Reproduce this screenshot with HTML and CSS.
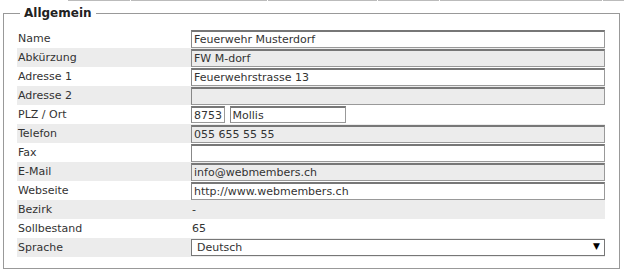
FILE: index.html
```
<!DOCTYPE html>
<html lang="de">
<head>
    <meta charset="UTF-8">
    <title>Allgemein</title>
    <link rel="stylesheet" href="styles.css">
</head>
<body>
    <div class="top-line">
        <span class="seg s1"></span>
        <span class="seg s2"></span>
        <span class="seg s3"></span>
        <span class="seg s4"></span>
        <span class="seg s5"></span>
        <span class="seg s6"></span>
    </div>
    <fieldset class="box">
        <legend>Allgemein</legend>
        <table class="form-table">
            <tr><td class="lbl">Name</td><td><input class="txt" type="text" value="Feuerwehr Musterdorf"></td></tr>
            <tr class="alt"><td class="lbl">Abkürzung</td><td><input class="txt" type="text" value="FW M-dorf"></td></tr>
            <tr><td class="lbl">Adresse 1</td><td><input class="txt" type="text" value="Feuerwehrstrasse 13"></td></tr>
            <tr class="alt"><td class="lbl">Adresse 2</td><td><input class="txt" type="text" value=""></td></tr>
            <tr><td class="lbl">PLZ / Ort</td><td><input class="txt plz" type="text" value="8753"> <input class="txt ort" type="text" value="Mollis"></td></tr>
            <tr class="alt"><td class="lbl">Telefon</td><td><input class="txt" type="text" value="055 655 55 55"></td></tr>
            <tr><td class="lbl">Fax</td><td><input class="txt" type="text" value=""></td></tr>
            <tr class="alt"><td class="lbl">E-Mail</td><td><input class="txt" type="text" value="info@webmembers.ch"></td></tr>
            <tr><td class="lbl">Webseite</td><td><input class="txt" type="text" value="http://www.webmembers.ch"></td></tr>
            <tr class="alt"><td class="lbl">Bezirk</td><td class="val">-</td></tr>
            <tr><td class="lbl">Sollbestand</td><td class="val">65</td></tr>
            <tr class="alt"><td class="lbl">Sprache</td><td>
                <span class="sel-wrap">
                    <select class="sel">
                        <option>Deutsch</option>
                        <option>Français</option>
                        <option>Italiano</option>
                    </select>
                </span>
            </td></tr>
        </table>
    </fieldset>
</body>
</html>
```

FILE: styles.css
```
* {
    margin: 0;
    padding: 0;
}
body {
    font-family: "DejaVu Sans", Verdana, sans-serif;
    font-size: 11px;
    color: #333;
    background: #fff;
}
.top-line {
    display: flex;
    height: 1px;
    padding-left: 68px;
}
.seg {
    display: block;
    height: 1px;
    background: #bbb;
    margin-right: 1px;
}
.s1 { width: 62px; }
.s2 { width: 136px; }
.s3 { width: 109px; }
.s4 { width: 61px; }
.s5 { width: 162px; }
.s6 { flex: 1; margin-right: 0; }

.box {
    margin: 5px 4px 0 3px;
    border: 1px solid #999;
    padding: 8px 14px 11px 13px;
}
.box legend {
    font-weight: bold;
    font-size: 12px;
    color: #222;
    padding: 0 4px;
    margin-left: 3px;
    line-height: 15px;
}
.form-table {
    width: 100%;
    border-collapse: collapse;
}
.form-table td {
    height: 19px;
    padding: 0;
    vertical-align: middle;
}
.form-table tr.alt td {
    background: #ececec;
}
.lbl {
    width: 173px;
    padding-left: 1px !important;
}
.val {
    padding-left: 1px !important;
}
.txt {
    display: block;
    width: 100%;
    height: 18px;
    box-sizing: border-box;
    font-family: inherit;
    font-size: 11px;
    color: #333;
    background: transparent;
    border: 1px solid #999;
    border-top: 2px solid #777;
    border-left-color: #888;
    padding: 0 2px;
    outline: none;
}
.plz, .ort {
    display: inline-block;
    height: 17px;
    vertical-align: middle;
}
.plz { width: 34px; }
.ort { width: 116px; margin-left: 1px; }

.sel-wrap {
    position: relative;
    display: block;
}
.sel {
    display: block;
    width: 100%;
    height: 17px;
    box-sizing: border-box;
    -webkit-appearance: none;
    appearance: none;
    font-family: inherit;
    font-size: 11px;
    color: #333;
    background: #fff;
    border: 1px solid #777;
    border-radius: 0;
    padding: 0 0 0 5px;
}
.sel-wrap:after {
    content: '\25BC';
    position: absolute;
    right: 5px;
    top: 2px;
    font-size: 9px;
    color: #000;
    pointer-events: none;
}
```
